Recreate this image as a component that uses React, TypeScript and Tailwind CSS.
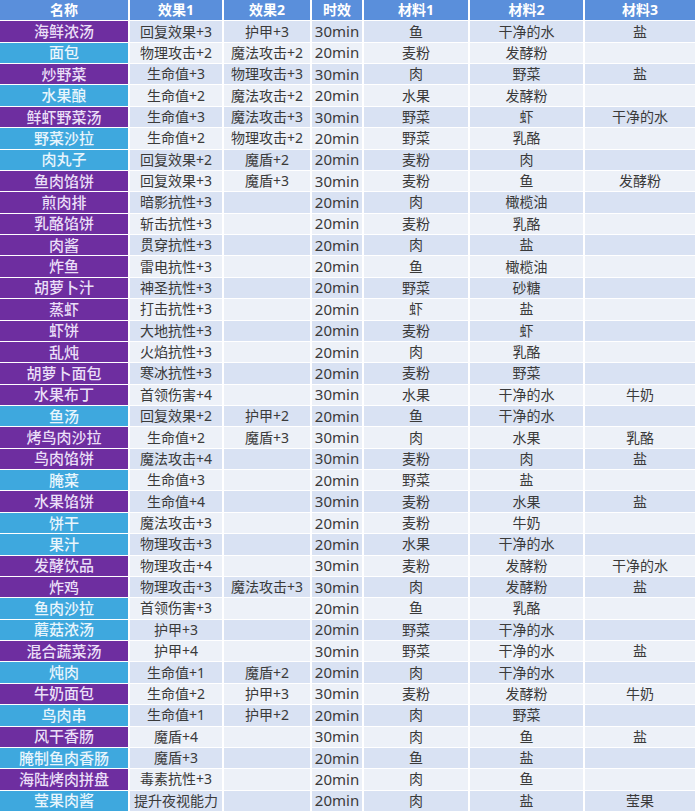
import React from "react";

type Row = {
  name: string;
  tone: "p" | "c";
  e1: string;
  e2: string;
  time: string;
  m1: string;
  m2: string;
  m3: string;
};

// 名称列颜色：p = 紫色, c = 青色
const rows: Row[] = [
  { name: "海鲜浓汤", tone: "p", e1: "回复效果+3", e2: "护甲+3", time: "30min", m1: "鱼", m2: "干净的水", m3: "盐" },
  { name: "面包", tone: "c", e1: "物理攻击+2", e2: "魔法攻击+2", time: "20min", m1: "麦粉", m2: "发酵粉", m3: "" },
  { name: "炒野菜", tone: "p", e1: "生命值+3", e2: "物理攻击+3", time: "30min", m1: "肉", m2: "野菜", m3: "盐" },
  { name: "水果酿", tone: "c", e1: "生命值+2", e2: "魔法攻击+2", time: "20min", m1: "水果", m2: "发酵粉", m3: "" },
  { name: "鲜虾野菜汤", tone: "p", e1: "生命值+3", e2: "魔法攻击+3", time: "30min", m1: "野菜", m2: "虾", m3: "干净的水" },
  { name: "野菜沙拉", tone: "c", e1: "生命值+2", e2: "物理攻击+2", time: "20min", m1: "野菜", m2: "乳酪", m3: "" },
  { name: "肉丸子", tone: "c", e1: "回复效果+2", e2: "魔盾+2", time: "20min", m1: "麦粉", m2: "肉", m3: "" },
  { name: "鱼肉馅饼", tone: "p", e1: "回复效果+3", e2: "魔盾+3", time: "30min", m1: "麦粉", m2: "鱼", m3: "发酵粉" },
  { name: "煎肉排", tone: "p", e1: "暗影抗性+3", e2: "", time: "20min", m1: "肉", m2: "橄榄油", m3: "" },
  { name: "乳酪馅饼", tone: "p", e1: "斩击抗性+3", e2: "", time: "20min", m1: "麦粉", m2: "乳酪", m3: "" },
  { name: "肉酱", tone: "p", e1: "贯穿抗性+3", e2: "", time: "20min", m1: "肉", m2: "盐", m3: "" },
  { name: "炸鱼", tone: "p", e1: "雷电抗性+3", e2: "", time: "20min", m1: "鱼", m2: "橄榄油", m3: "" },
  { name: "胡萝卜汁", tone: "p", e1: "神圣抗性+3", e2: "", time: "20min", m1: "野菜", m2: "砂糖", m3: "" },
  { name: "蒸虾", tone: "p", e1: "打击抗性+3", e2: "", time: "20min", m1: "虾", m2: "盐", m3: "" },
  { name: "虾饼", tone: "p", e1: "大地抗性+3", e2: "", time: "20min", m1: "麦粉", m2: "虾", m3: "" },
  { name: "乱炖", tone: "p", e1: "火焰抗性+3", e2: "", time: "20min", m1: "肉", m2: "乳酪", m3: "" },
  { name: "胡萝卜面包", tone: "p", e1: "寒冰抗性+3", e2: "", time: "20min", m1: "麦粉", m2: "野菜", m3: "" },
  { name: "水果布丁", tone: "p", e1: "首领伤害+4", e2: "", time: "30min", m1: "水果", m2: "干净的水", m3: "牛奶" },
  { name: "鱼汤", tone: "c", e1: "回复效果+2", e2: "护甲+2", time: "20min", m1: "鱼", m2: "干净的水", m3: "" },
  { name: "烤鸟肉沙拉", tone: "p", e1: "生命值+2", e2: "魔盾+3", time: "30min", m1: "肉", m2: "水果", m3: "乳酪" },
  { name: "鸟肉馅饼", tone: "p", e1: "魔法攻击+4", e2: "", time: "30min", m1: "麦粉", m2: "肉", m3: "盐" },
  { name: "腌菜", tone: "c", e1: "生命值+3", e2: "", time: "20min", m1: "野菜", m2: "盐", m3: "" },
  { name: "水果馅饼", tone: "p", e1: "生命值+4", e2: "", time: "30min", m1: "麦粉", m2: "水果", m3: "盐" },
  { name: "饼干", tone: "c", e1: "魔法攻击+3", e2: "", time: "20min", m1: "麦粉", m2: "牛奶", m3: "" },
  { name: "果汁", tone: "c", e1: "物理攻击+3", e2: "", time: "20min", m1: "水果", m2: "干净的水", m3: "" },
  { name: "发酵饮品", tone: "p", e1: "物理攻击+4", e2: "", time: "30min", m1: "麦粉", m2: "发酵粉", m3: "干净的水" },
  { name: "炸鸡", tone: "p", e1: "物理攻击+3", e2: "魔法攻击+3", time: "30min", m1: "肉", m2: "发酵粉", m3: "盐" },
  { name: "鱼肉沙拉", tone: "c", e1: "首领伤害+3", e2: "", time: "20min", m1: "鱼", m2: "乳酪", m3: "" },
  { name: "蘑菇浓汤", tone: "c", e1: "护甲+3", e2: "", time: "20min", m1: "野菜", m2: "干净的水", m3: "" },
  { name: "混合蔬菜汤", tone: "p", e1: "护甲+4", e2: "", time: "30min", m1: "野菜", m2: "干净的水", m3: "盐" },
  { name: "炖肉", tone: "c", e1: "生命值+1", e2: "魔盾+2", time: "20min", m1: "肉", m2: "干净的水", m3: "" },
  { name: "牛奶面包", tone: "p", e1: "生命值+2", e2: "护甲+3", time: "30min", m1: "麦粉", m2: "发酵粉", m3: "牛奶" },
  { name: "鸟肉串", tone: "c", e1: "生命值+1", e2: "护甲+2", time: "20min", m1: "肉", m2: "野菜", m3: "" },
  { name: "风干香肠", tone: "p", e1: "魔盾+4", e2: "", time: "30min", m1: "肉", m2: "鱼", m3: "盐" },
  { name: "腌制鱼肉香肠", tone: "c", e1: "魔盾+3", e2: "", time: "20min", m1: "鱼", m2: "盐", m3: "" },
  { name: "海陆烤肉拼盘", tone: "p", e1: "毒素抗性+3", e2: "", time: "20min", m1: "肉", m2: "鱼", m3: "" },
  { name: "莹果肉酱", tone: "c", e1: "提升夜视能力", e2: "", time: "20min", m1: "肉", m2: "盐", m3: "莹果" },
];

const headers = ["名称", "效果1", "效果2", "时效", "材料1", "材料2", "材料3"];

const cellBase = "flex items-center justify-center whitespace-nowrap";

export default function App() {
  return (
    <div
      className="w-[697px] h-[811px] bg-white pr-[2px] text-[14px] leading-none"
      style={{ fontFamily: '"Noto Sans", "Noto Sans CJK SC", sans-serif' }}
    >
      <div className="grid h-full grid-cols-[128px_92px_86px_50px_104px_113px_110px] grid-rows-[repeat(38,minmax(0,1fr))] gap-x-[2px] gap-y-px">
        {headers.map((h) => (
          <div key={h} className={`${cellBase} bg-[#5a8fdb] font-bold text-white`}>
            {h}
          </div>
        ))}
        {rows.map((r, i) => {
          const band = i % 2 === 0 ? "bg-[#d9e2f3]" : "bg-[#edf1f8]";
          const nameBg =
            r.tone === "p"
              ? "bg-[#6e2ea0] text-[#eadff7]"
              : "bg-[#3ea8de] text-[#e8f5fc]";
          return (
            <React.Fragment key={r.name}>
              <div className={`${cellBase} ${nameBg} text-[15px] font-medium`}>{r.name}</div>
              <div className={`${cellBase} ${band} text-[#3a3a3a]`}>{r.e1}</div>
              <div className={`${cellBase} ${band} text-[#3a3a3a]`}>{r.e2}</div>
              <div className={`${cellBase} ${band} text-[15px] text-[#3a3a3a]`}>{r.time}</div>
              <div className={`${cellBase} ${band} text-[#3a3a3a]`}>{r.m1}</div>
              <div className={`${cellBase} ${band} text-[#3a3a3a]`}>{r.m2}</div>
              <div className={`${cellBase} ${band} text-[#3a3a3a]`}>{r.m3}</div>
            </React.Fragment>
          );
        })}
      </div>
    </div>
  );
}
